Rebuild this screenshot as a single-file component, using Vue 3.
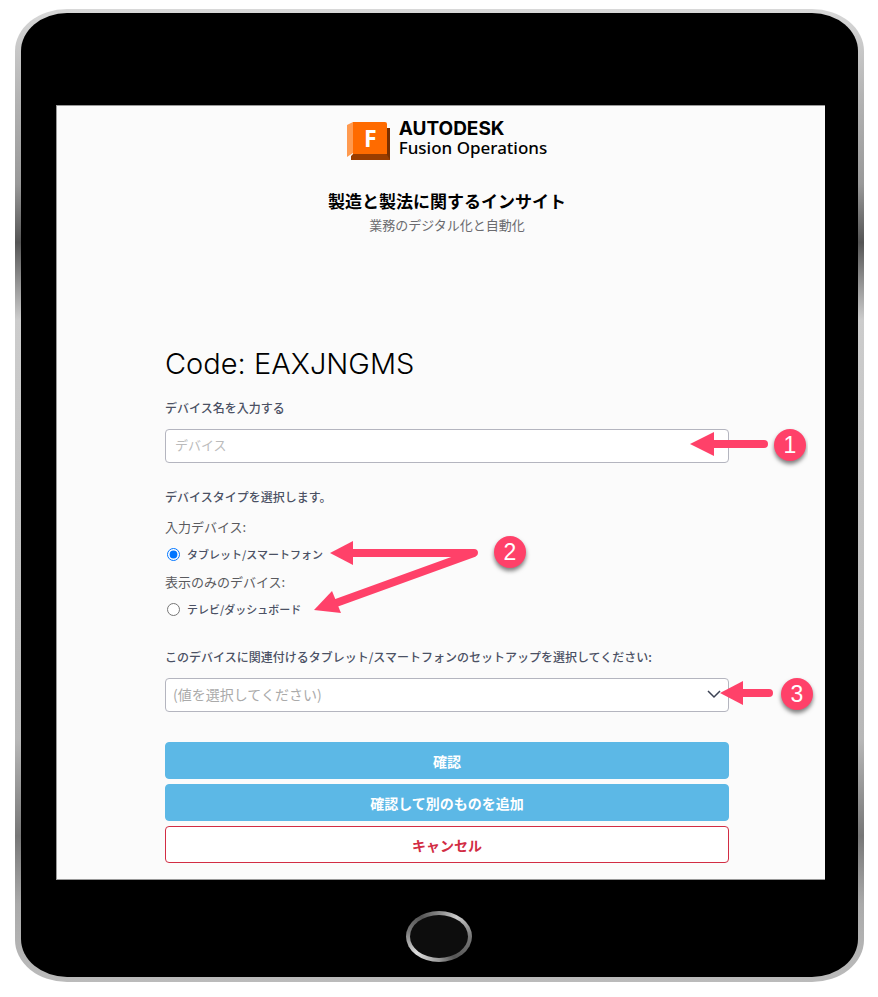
<script setup>
import { ref } from 'vue'

const deviceName = ref('')
const deviceType = ref('tablet')
const setup = ref('')
</script>

<template>
  <div class="device">
    <div class="bezel">
      <main class="screen">
        <header class="intro">
          <div class="brand">
            <svg class="brand-icon" width="44" height="40" viewBox="0 0 44 40" aria-hidden="true">
              <path d="M0 4 6 1V32L0 36Z" fill="#ff9a4f" />
              <path d="M38 8H43V39H4V35L7 32H38Z" fill="#9a3d00" />
              <path d="M39 7H43V39L39 32Z" fill="#7a3000" />
              <path d="M6 1H38Q40 1 40 3V33H6Z" fill="#ff6b00" />
              <text class="brand-letter" x="17" y="26">F</text>
            </svg>
            <div class="brand-text">
              <span class="brand-company">AUTODESK</span>
              <span class="brand-product">Fusion Operations</span>
            </div>
          </div>
          <h1 class="title">製造と製法に関するインサイト</h1>
          <p class="subtitle">業務のデジタル化と自動化</p>
        </header>

        <form class="form" @submit.prevent>
          <h2 class="code">Code: EAXJNGMS</h2>

          <label class="label" for="device-name">デバイス名を入力する</label>
          <div class="field">
            <input id="device-name" v-model="deviceName" class="control" type="text" placeholder="デバイス" />
            <svg class="callout callout-name" width="124" height="48" viewBox="0 0 124 48" aria-hidden="true">
              <path class="shaft" d="M20 21H80" />
              <path class="head" d="M6 21 30 9V33Z" />
              <circle class="badge" cx="106" cy="22" r="16" />
              <text class="badge-number" x="106" y="30">1</text>
            </svg>
          </div>

          <fieldset class="types">
            <legend class="label types-label">デバイスタイプを選択します。</legend>
            <p class="group">入力デバイス:</p>
            <label class="option" for="type-tablet">
              <input id="type-tablet" v-model="deviceType" type="radio" name="type" value="tablet" />
              タブレット/スマートフォン
            </label>
            <p class="group group-next">表示のみのデバイス:</p>
            <label class="option" for="type-tv">
              <input id="type-tv" v-model="deviceType" type="radio" name="type" value="tv" />
              テレビ/ダッシュボード
            </label>
            <svg class="callout callout-type" width="224" height="96" viewBox="0 0 224 96" aria-hidden="true">
              <path class="shaft" d="M40 23H164L26 73" />
              <path class="head" d="M20 23 43 11V35Z" />
              <path class="head" d="M4 80 22 61 31 83Z" />
              <circle class="badge" cx="200" cy="22" r="16" />
              <text class="badge-number" x="200" y="30">2</text>
            </svg>
          </fieldset>

          <label class="label setup-label" for="setup">このデバイスに関連付けるタブレット/スマートフォンのセットアップを選択してください:</label>
          <div class="field">
            <select id="setup" v-model="setup" class="control select">
              <option value="">(値を選択してください)</option>
            </select>
            <svg class="chevron" width="14" height="9" viewBox="0 0 14 9" aria-hidden="true">
              <path d="M1 1 7 7 13 1" />
            </svg>
            <svg class="callout callout-setup" width="104" height="48" viewBox="0 0 104 48" aria-hidden="true">
              <path class="shaft" d="M20 21H53" />
              <path class="head" d="M4 21 27 9V33Z" />
              <circle class="badge" cx="81" cy="22" r="16" />
              <text class="badge-number" x="81" y="30">3</text>
            </svg>
          </div>

          <div class="actions">
            <button class="button primary" type="submit">確認</button>
            <button class="button primary" type="button">確認して別のものを追加</button>
            <button class="button cancel" type="button">キャンセル</button>
          </div>
        </form>
      </main>
      <button class="home" type="button" aria-label="Home"></button>
    </div>
  </div>
</template>

<style>
body {
  background: #fff;
}
</style>

<style scoped>
.device {
  margin: 9px 14px 15px 15px;
  padding: 4px 6px 5px 6px;
  border-radius: 52px / 42px;
  background: linear-gradient(180deg, #d8d8d8 0%, #b4b4b4 9%, #999 18%, #555 24%, #ccc 32%, #b8b8b8 75%, #777 85%, #aaa 92%, #bbb 100%);
  font-family: "Noto Sans CJK JP", sans-serif;
}

.bezel {
  box-sizing: border-box;
  display: flex;
  flex-direction: column;
  padding: 92px 33px 15px 35px;
  border-radius: 46px / 38px;
  background: #000;
}

.screen {
  padding: 15px 96px 16px 108px;
  border: 1px solid #999;
  border-right: 0;
  background: #fbfbfb;
}

.intro {
  text-align: center;
}

.brand {
  display: flex;
  justify-content: center;
  gap: 8px;
  height: 40px;
}

.brand-letter {
  font: 700 23px "Noto Sans", sans-serif;
  fill: #fff;
}

.brand-text {
  display: flex;
  flex-direction: column;
  color: #000;
  text-align: left;
}

.brand-company {
  font: 700 19px/16px Inter, sans-serif;
}

.brand-product {
  font: 500 17px/22px "Noto Sans", sans-serif;
}

.title {
  margin: 28px 0 0;
  color: #000;
  font-size: 17px;
  font-weight: 700;
  line-height: 24px;
}

.subtitle {
  margin: 0;
  color: #6b6b6f;
  font-size: 13px;
  line-height: 24px;
}

.code {
  margin: 107px 0 12px;
  color: #000;
  font: 300 29px/40px Inter, sans-serif;
}

.label {
  display: block;
  color: #4b5164;
  font-size: 12px;
  font-weight: 500;
  line-height: 24px;
}

.field {
  position: relative;
  margin-top: 9px;
}

.control {
  box-sizing: border-box;
  display: block;
  width: 100%;
  height: 34px;
  padding: 0 9px 3px;
  border: 1px solid #b4b5bf;
  border-radius: 4px;
  background: #fff;
  font: 13px "Noto Sans CJK JP", sans-serif;
}

.control::placeholder {
  color: #bbb;
  opacity: 1;
}

.select {
  padding: 0 7px 3px;
  appearance: none;
  color: #aaa;
  font-size: 14px;
}

.chevron {
  position: absolute;
  top: 12px;
  right: 8px;
  fill: none;
  stroke: #3c4254;
  stroke-width: 1.5;
  pointer-events: none;
}

.types {
  position: relative;
  min-width: 0;
  margin: 22px 0 24px;
  padding: 0;
  border: 0;
}

.types-label {
  padding: 0;
}

.group {
  margin: 6px 0 3px;
  color: #5a5a5e;
  font-size: 13px;
  line-height: 24px;
}

.group-next {
  margin-top: 4px;
}

.option {
  display: flex;
  align-items: center;
  gap: 7px;
  padding-left: 2px;
  color: #4b5164;
  font-size: 11px;
  font-weight: 500;
  line-height: 24px;
}

.option input {
  width: 13px;
  height: 13px;
  margin: 0;
}

.actions {
  display: grid;
  gap: 5px;
  margin-top: 30px;
}

.button {
  height: 37px;
  padding: 0;
  border: 1px solid #5cb8e6;
  border-radius: 4px;
  font: 700 14px "Noto Sans CJK JP", sans-serif;
}

.primary {
  background: #5cb8e6;
  color: #fff;
}

.cancel {
  border-color: #d22d44;
  background: #fff;
  color: #d22d44;
}

.callout {
  position: absolute;
  pointer-events: none;
}

.callout-name {
  top: -6px;
  right: -79px;
}

.callout-type {
  top: 21px;
  left: 145px;
}

.callout-setup {
  top: -6px;
  right: -91px;
}

.shaft {
  fill: none;
  stroke: #ff4169;
  stroke-width: 8;
  stroke-linecap: round;
  stroke-linejoin: round;
}

.head {
  fill: #ff4169;
}

.badge {
  fill: #ff4169;
  filter: drop-shadow(0 3px 2px rgb(0 0 0 / 50%));
}

.badge-number {
  fill: #fff;
  font: 23px "Liberation Sans", sans-serif;
  text-anchor: middle;
}

.home {
  align-self: center;
  width: 66px;
  height: 51px;
  margin: 31px 4px 0 0;
  padding: 0;
  border: 4px solid transparent;
  border-radius: 50%;
  background:
    linear-gradient(#0d0d0d, #0d0d0d) padding-box,
    conic-gradient(#888, #ccc 12%, #777 25%, #555 40%, #999 50%, #ddd 65%, #777 78%, #555 88%, #888) border-box;
}
</style>
